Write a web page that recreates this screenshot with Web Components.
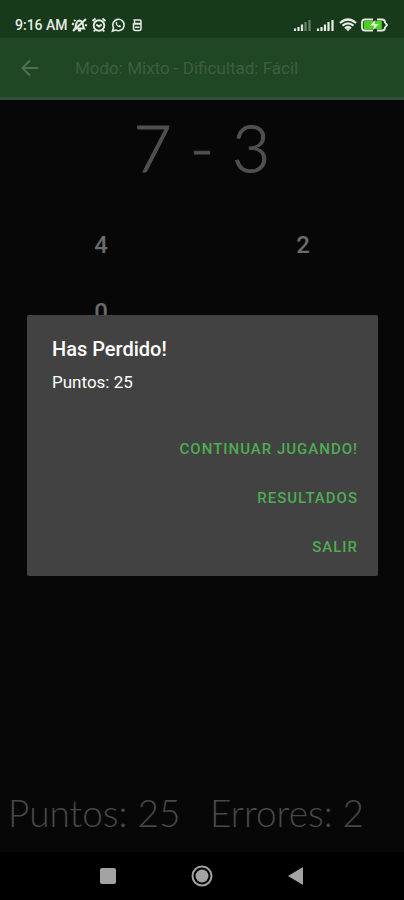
<!DOCTYPE html>
<html lang="es">
<head>
<meta charset="utf-8">
<meta name="viewport" content="width=device-width, initial-scale=1">
<title>Modo: Mixto - Dificultad: Fácil</title>
<style>
  html, body { margin: 0; height: 100%; background: #000; }
  body { font-family: Roboto, "Liberation Sans", sans-serif; color: #fff; }
</style>
</head>
<body>
<game-screen></game-screen>

<template id="status-bar">
  <style>
    :host { display: flex; align-items: center; justify-content: space-between; height: 38px; padding: 12px 16px 0 15px; box-sizing: border-box; background: #173a1a; color: #e6ece6; }
    div { display: flex; align-items: center; gap: 4px; }
    .left { gap: 3px; }
    time { font-size: 14px; line-height: 18px; font-weight: 500; }
    svg { display: block; fill: none; stroke: currentColor; }
  </style>
  <div class="left">
    <time>9:16 AM</time>
    <svg width="17" height="16" viewBox="0 0 17 16" stroke-width="2"><path d="M4 11.500C5.500 9.500 4 4 8.500 3.500C13 4 11.500 9.500 13 11.500ZM7 13.500h3M2 14L15 2M1 6.500l2 1M16 8.500l-2-.5M3 3l1.500 1"/></svg>
    <svg width="16" height="16" viewBox="0 0 16 16" stroke-width="1.900"><circle cx="8" cy="8.500" r="5.300"/><path d="M5.300 7.500L8 9.500l2.700-2M1.500 4L4.500 1.500M14.500 4l-3-2.500M4 13l-1.200 1.500M12 13l1.200 1.500"/></svg>
    <svg width="16" height="16" viewBox="0 0 15 16" stroke-width="1.600"><path d="M2 14l1-3.200A5.700 5.700 0 1 1 5.300 13Z"/><path d="M5.200 5.200c-.4 2.800 1.800 5 4.800 5l.5-1.500-1.600-.7-.9.8-1.700-1.700.7-1-.8-1.300Z" fill="currentColor" stroke="none"/></svg>
    <svg width="16" height="16" viewBox="0 0 16 16" stroke-width="1.500"><path d="M4.500 3h6.500q1 0 1 1v2.500H5.500V3M4.500 7h7.500v4.500q0 2-2 2H6.500q-2 0-2-2ZM6 10.300h4.500"/></svg>
  </div>
  <div class="right">
    <svg width="19" height="13" viewBox="0 0 19 13" stroke-width="2.200"><path d="M2 12V9.500M5.500 12V8M9 12V5.500"/><path d="M12.500 12V3M16.500 12V1" opacity=".4"/></svg>
    <svg width="19" height="13" viewBox="0 0 19 13" stroke-width="2.200"><path d="M2 12V9.500M5.500 12V8M9 12V5.500M12.500 12V3M16.500 12V1"/></svg>
    <svg width="18" height="14" viewBox="0 0 18 14" stroke-width="2.300"><path d="M1 5Q9-2 17 5M3.500 7.700Q9 3 14.500 7.700M6 10.400Q9 7.700 12 10.400"/><path d="M7 11Q9 9.500 11 11L9 13.300Z" fill="currentColor" stroke="none"/></svg>
    <svg width="27" height="14" viewBox="0 0 27 14" stroke-width="1.800"><rect x="2.800" y="3" width="18" height="8" rx="1" fill="#4bd21b" stroke="none"/><path d="M12 1.500H4Q1 1.500 1 4.500v5q0 3 3 3h8M16 1.500h5q3 0 3 3l2 2.500-2 2.500q0 3-3 3h-5"/><path d="M14.500 2L9 7.500h4L12 12l6-6h-4.500Z" fill="#e6ece6" stroke="none"/></svg>
  </div>
</template>

<template id="app-bar">
  <style>
    :host { display: flex; align-items: center; gap: 34px; height: 62px; padding: 0 18px 0 18px; box-sizing: border-box; background: #1f4724; border-bottom: 3px solid #344f38; color: #3d5d40; }
    button { display: flex; padding: 0; border: 0; background: none; color: #526f55; width: 23px; height: 24px; align-items: center; justify-content: center; }
    svg { fill: none; stroke: currentColor; stroke-width: 2; }
    h1 { margin: 0; font-size: 17px; line-height: 24px; font-weight: 400; white-space: nowrap; }
  </style>
  <button aria-label="Volver"><svg width="19" height="18" viewBox="0 0 19 18"><path d="M18 9H3M10 1.500L2.500 9l7.500 7.500"/></svg></button>
  <h1><slot></slot></h1>
</template>

<template id="answer-option">
  <style>
    :host { display: block; }
    button { width: 100%; height: 67px; padding: 0; border: 0; background: none; color: #6b6b6b; font: 500 24px/28px Roboto, sans-serif; }
  </style>
  <button><slot></slot></button>
</template>

<template id="dialog-action">
  <style>
    :host { display: block; }
    button { height: 49px; padding: 0; border: 0; background: none; color: #4fac54; font: 500 15px/20px Roboto, sans-serif; letter-spacing: 1px; text-transform: uppercase; white-space: nowrap; }
  </style>
  <button><slot></slot></button>
</template>

<template id="result-dialog">
  <style>
    :host { display: block; box-sizing: border-box; width: 100%; padding: 20px 20px 4px 25px; background: #424242; border-radius: 2px; color: #fff; }
    h2 { margin: 0; font-size: 20px; line-height: 28px; font-weight: 500; }
    p { margin: 8px 0 32px; font-size: 17px; line-height: 22px; }
    .actions { display: flex; flex-direction: column; align-items: flex-end; }
  </style>
  <section role="dialog" aria-labelledby="t">
    <h2 id="t"><slot name="title"></slot></h2>
    <p><slot></slot></p>
    <div class="actions"><slot name="actions"></slot></div>
  </section>
</template>

<template id="score-bar">
  <style>
    :host { display: grid; grid-template-columns: 1fr 1fr; padding: 0 0 15px; color: #484848; font: 300 37px/48px Lato, "Open Sans", sans-serif; }
    span { padding-left: 8px; white-space: nowrap; }
  </style>
  <slot name="points"></slot>
  <slot name="errors"></slot>
</template>

<template id="nav-bar">
  <style>
    :host { display: grid; grid-template-columns: repeat(3, 94px); justify-content: center; height: 48px; background: #000; color: #a3a3a3; }
    button { display: flex; align-items: center; justify-content: center; padding: 0; border: 0; background: none; color: inherit; }
    svg { fill: currentColor; }
  </style>
  <button aria-label="Recientes"><svg width="16" height="16" viewBox="0 0 16 16"><rect width="16" height="16" rx="2"/></svg></button>
  <button aria-label="Inicio"><svg width="22" height="22" viewBox="0 0 22 22"><circle cx="11" cy="11" r="9.500" fill="none" stroke="currentColor" stroke-width="2"/><circle cx="11" cy="11" r="6.500"/></svg></button>
  <button aria-label="Atrás"><svg width="16" height="18" viewBox="0 0 16 18"><path d="M0 9L15 0V18Z"/></svg></button>
</template>

<template id="game-screen">
  <style>
    :host { display: flex; flex-direction: column; min-height: 100vh; background: #070707; }
    .stage { flex: 1; position: relative; display: flex; flex-direction: column; }
    main { flex: 1; display: flex; flex-direction: column; }
    .question { margin: 0; padding: 7px 0 24px; text-align: center; color: #505050; font: 300 66px/80px Lato, "Open Sans", sans-serif; -webkit-text-stroke: 1px #505050; }
    .answers { display: grid; grid-template-columns: 1fr 1fr; flex: 1; align-content: start; }
    score-bar span { padding-left: 8px; white-space: nowrap; }
    .overlay { position: absolute; inset: 0; display: flex; align-items: center; padding: 0 26px 0 27px; }
  </style>
  <status-bar></status-bar>
  <div class="stage">
    <app-bar>Modo: Mixto - Dificultad: Fácil</app-bar>
    <main>
      <p class="question">7 - 3</p>
      <div class="answers">
        <answer-option>4</answer-option>
        <answer-option>2</answer-option>
        <answer-option>0</answer-option>
      </div>
      <score-bar><span slot="points">Puntos: 25</span><span slot="errors">Errores: 2</span></score-bar>
    </main>
    <div class="overlay">
      <result-dialog>
        <span slot="title">Has Perdido!</span>
        Puntos: 25
        <dialog-action slot="actions">Continuar jugando!</dialog-action>
        <dialog-action slot="actions">Resultados</dialog-action>
        <dialog-action slot="actions">Salir</dialog-action>
      </result-dialog>
    </div>
  </div>
  <nav-bar></nav-bar>
</template>

<script>
  for (const name of ["status-bar", "app-bar", "answer-option", "dialog-action", "result-dialog", "score-bar", "nav-bar", "game-screen"]) {
    customElements.define(name, class extends HTMLElement {
      constructor() {
        super();
        this.attachShadow({ mode: "open" }).append(document.getElementById(name).content.cloneNode(true));
      }
    });
  }
</script>
</body>
</html>
